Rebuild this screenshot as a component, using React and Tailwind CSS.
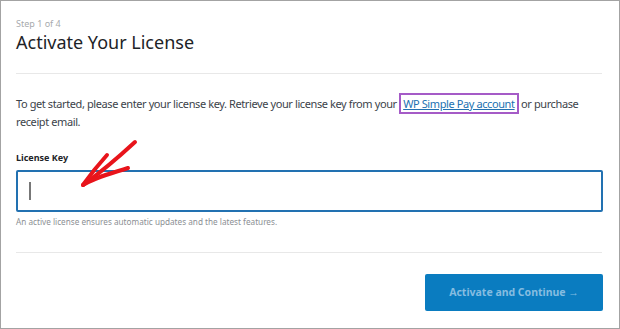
import React from 'react';

const App = () => {
  return (
    <div className="w-[620px] h-[329px] bg-white border border-[#a3a3a3] overflow-hidden font-['Noto_Sans',sans-serif]">
      <div className="px-[15px] pt-[17px]">
        {/* Header */}
        <p className="text-[9px] leading-[12px] text-[#a7aaad]">Step 1 of 4</p>
        <h1 className="text-[18px] leading-[24px] text-[#1d2327]">Activate Your License</h1>
        <hr className="mt-[19px] w-[586px] border-0 border-t border-[#e8e8e8]" />

        {/* Body */}
        <p className="mt-[21px] w-[586px] text-[11px] leading-[18px] text-[#3c434a] tracking-[-0.4px]">
          To get started, please enter your license key. Retrieve your license key from your{' '}
          <a href="#" className="mx-[2px] px-[2px] py-[1px] text-[#2271b1] underline outline-2 outline-[#a55bc7]">
            WP Simple Pay account
          </a>{' '}
          or purchase receipt email.
        </p>

        <div className="relative">
          <label className="block mt-[21px] text-[9px] leading-[12px] font-bold text-[#1d2327]">License Key</label>
          <div className="mt-[6px] w-[587px] h-[42px] border-2 border-[#2271b1] rounded-[2px] flex items-center pl-[11px]">
            <span className="w-[1.5px] h-[18px] bg-[#777]"></span>
          </div>
          {/* Red annotation arrow */}
          <svg className="absolute left-[48px] top-[-13px]" width="80" height="56" viewBox="0 0 80 56" fill="none">
            <path d="M71 3 C58 15 40 31 19 46" stroke="#e8141b" strokeWidth="4" strokeLinecap="round" />
            <path d="M43 16 C34 26 26 36 19 46 C30 39 42 36 64 29" stroke="#e8141b" strokeWidth="4" strokeLinecap="round" strokeLinejoin="round" />
          </svg>
        </div>
        <p className="mt-[4px] text-[8.2px] leading-[11px] text-[#8c8f94]">
          An active license ensures automatic updates and the latest features.
        </p>

        <hr className="mt-[25px] w-[586px] border-0 border-t border-[#e8e8e8]" />

        {/* Footer */}
        <div className="mt-[21px] w-[587px] flex justify-end">
          <button className="w-[178px] h-[37px] bg-[#0a7cc0] rounded-[2px] text-[10.5px] font-bold text-[#86bde0]">
            Activate and Continue →
          </button>
        </div>
      </div>
    </div>
  );
};

export default App;
